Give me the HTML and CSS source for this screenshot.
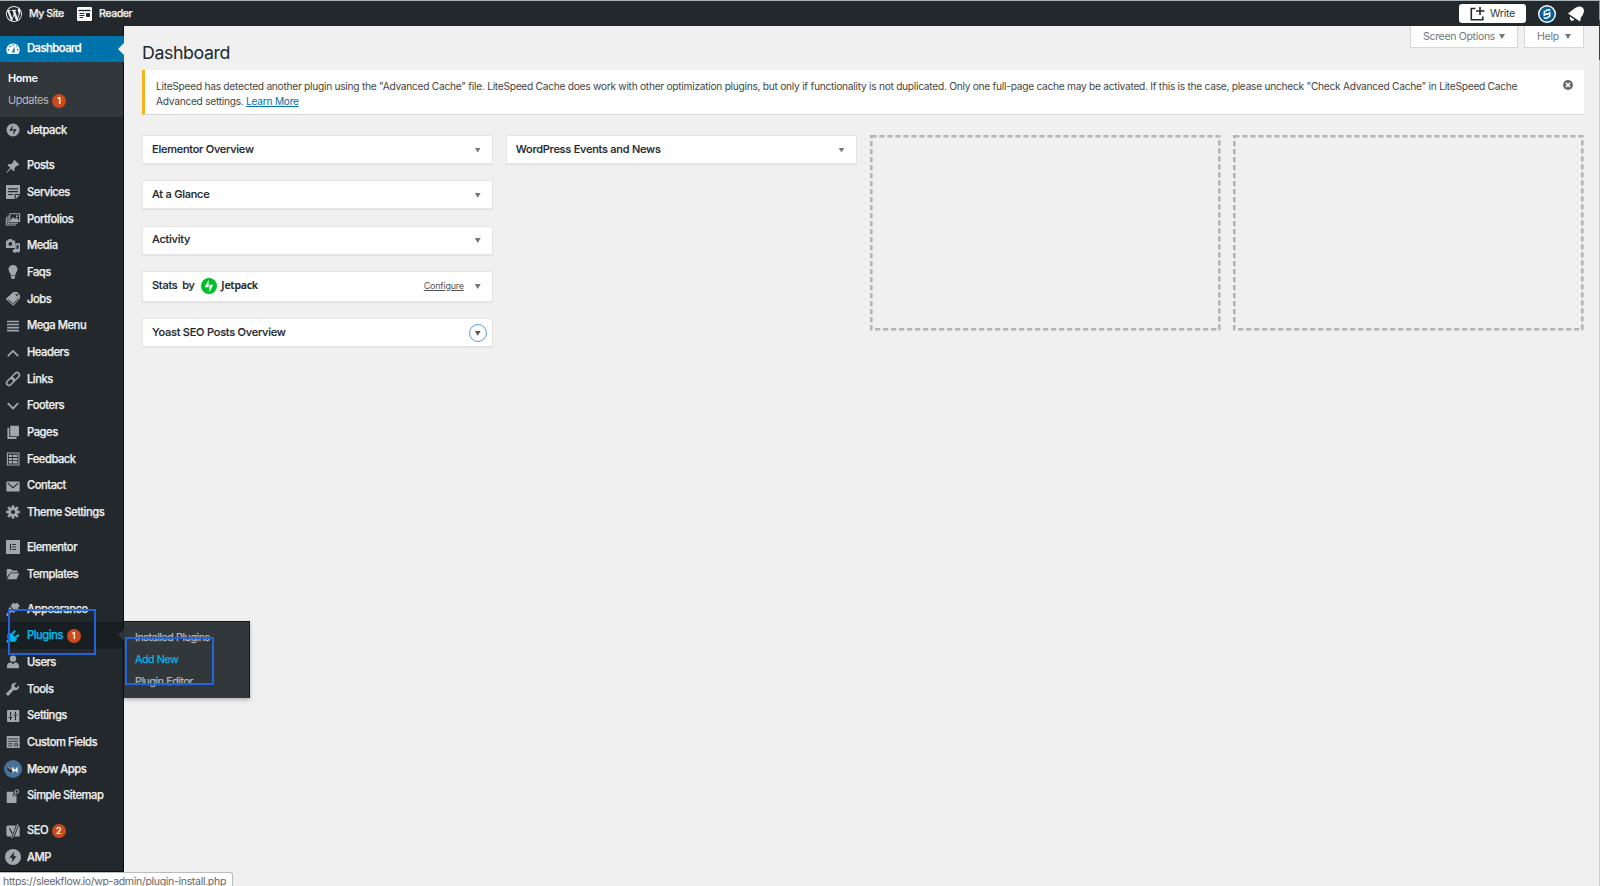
FILE: index.html
```html
<!DOCTYPE html>
<html lang="en">
<head>
<meta charset="utf-8">
<title>Dashboard</title>
<link rel="stylesheet" href="styles.css">
</head>
<body>
<header class="bar">
  <a class="bar-link site"><svg class="wp" viewBox="0 0 20 20"><path fill="#eee" d="M20 10c0-5.51-4.49-10-10-10S0 4.490 0 10c0 5.520 4.490 10 10 10s10-4.480 10-10zM7.780 15.370L4.370 6.220c.55-.02 1.170-.08 1.170-.08.5-.06.44-1.130-.06-1.110 0 0-1.450.11-2.370.11-.18 0-.37 0-.58-.01C4.120 2.690 6.870 1.110 10 1.110c2.330 0 4.450.87 6.050 2.340-.68-.11-1.650.39-1.650 1.580 0 .74.45 1.360.9 2.100.35.61.55 1.360.55 2.460 0 1.490-1.400 5-1.400 5l-3.030-8.370c.54-.02.82-.17.82-.17.5-.05.44-1.250-.06-1.220 0 0-1.440.12-2.380.12-.87 0-2.330-.12-2.330-.12-.5-.03-.56 1.200-.06 1.220l.92.08 1.260 3.410zM17.410 10c.24-.64.74-1.870.43-4.250.7 1.290 1.050 2.710 1.050 4.250 0 3.290-1.730 6.240-4.400 7.780.97-2.590 1.940-5.200 2.920-7.780zM6.100 18.090C3.120 16.650 1.110 13.530 1.110 10c0-1.300.23-2.480.72-3.590C3.250 10.300 4.670 14.200 6.100 18.090zm4.030-6.630l2.580 6.980c-.86.29-1.760.45-2.710.45-.79 0-1.570-.11-2.290-.33.81-2.380 1.620-4.740 2.420-7.100z"/></svg>My Site</a>
  <a class="bar-link reader"><svg class="rd" viewBox="0 0 15 14"><rect width="15" height="14" rx="1.300" fill="#fff"/><path d="M1.500 3.500h12" stroke="#23282d" stroke-width="1.400"/><path d="M2.500 6.500h5M2.500 8.500h5M2.500 10.500h3.500" stroke="#23282d" stroke-width="1"/><path d="M9.500 6.500h3v3h-3z" fill="#23282d" stroke="#23282d"/></svg>Reader</a>
  <span class="grow"></span>
  <a class="write"><svg viewBox="0 0 15 14"><path d="M5.500 1.500H1.300v11.200h11.500V9.500M10 0v8M6 4h8.500" fill="none" stroke="#23282d" stroke-width="1.600"/></svg>Write</a>
  <svg class="avatar" viewBox="0 0 18 18"><circle cx="9" cy="9" r="9" fill="#fff"/><circle cx="9" cy="9" r="7.600" fill="#0b5f96"/><path d="M12.200 4.900 9.500 4.700 6.300 7v3.200L9.200 8.300M8.800 9.700l2.900-1.900V11l-3.200 2.300-2.700-.2" fill="none" stroke="#fff" stroke-width="1.500"/></svg>
  <svg class="bell" viewBox="0 0 16 16"><path fill="#fff" d="M0 7.500 4.500 4Q9 0 12 .5q4 .5 4 5-.8 3.700-3 5.800L12 15.500z"/><path fill="#fff" d="M2 10.500 6.300 13.600Q5 15.700 3 14.500 1.200 13 2 10.500z"/></svg>
</header>
<div class="shell">
  <nav class="menu">
    <a class="item current"><svg viewBox="0 0 20 20"><path d="M2.500 17A9.300 9.300 0 0 1 10 2a9.300 9.300 0 0 1 7.500 15z"/><path class="cut" d="M8.500 14.500 12 6l.5 9zM9 3.500h2v2H9zM5 5.500h2v2H5zM2.500 10h2v2h-2zM15.500 10h2v2h-2zM14 5.500h1.500V7H14z"/></svg>Dashboard</a>
    <div class="sub"><a class="on">Home</a><a>Updates <b class="badge">1</b></a></div>
    <a class="item"><svg viewBox="0 0 20 20"><circle cx="10" cy="10" r="9.300"/><path class="cut" d="M9.300 3v8.300H5zM10.700 17V8.700H15z"/></svg>Jetpack</a>
    <i class="sep first"></i>
    <a class="item"><svg viewBox="0 0 20 20"><path d="M10.400 3 12 1 19 8l-2 1.800-1.600-.3-3.200 3.200.1 3.400-1.500 1.500-3.500-3.700L1.300 19.500l-.8-.7 5.500-6.200L2 9l1.800-1.700 3.500.3 3.300-3.200z"/></svg>Posts</a>
    <a class="item"><svg viewBox="0 0 20 20"><path d="M0 0h20v14l-6 6H0z"/><path class="line" d="M3 5.500h14M3 9.500h14M3 13.500h7M13 20v-6.500h7"/></svg>Services</a>
    <a class="item"><svg viewBox="0 0 20 20"><path class="str" d="M.5 7.500v11h14M3 5v11h14M5.500 2.500h14v11h-14z"/><path d="m6 13 4-6 3 3 2-2 4 5z"/><circle cx="15.500" cy="6" r="1.500"/></svg>Portfolios</a>
    <a class="item"><svg viewBox="0 0 20 20"><path d="M0 2h3l1-2h4l1 2h4v11H0zM13.500 6H20v10.500a2.700 2.700 0 1 1-2-2.600V9h-3v8a2.700 2.700 0 1 1-2-2.600z"/><circle class="cut" cx="6.200" cy="7" r="2.700"/></svg>Media</a>
    <a class="item"><svg viewBox="0 0 20 20"><path d="M10 0c4 0 6.500 2.800 6.500 6.200 0 3.500-3 4.800-3.200 8.300H6.700C6.500 11 3.500 9.700 3.500 6.200 3.500 2.800 6 0 10 0zM7 15.500h6v2L11.500 20h-3L7 17.500z"/></svg>Faqs</a>
    <a class="item"><svg viewBox="0 0 20 20"><path d="M10.500 0H16l4 4.500V9l-9.500 10.500L-.5 10z"/><path class="line thin" d="m2.500 10.500 8 6.500L18 8.500M13 2.500l4 4"/><circle class="cut" cx="16" cy="3.800" r="1.300"/></svg>Jobs</a>
    <a class="item"><svg viewBox="0 0 20 20"><path d="M1.500 2.500h17v2.300h-17zm0 4.300h17v2.300h-17zm0 4.300h17v2.300h-17zm0 4.300h17v2.300h-17z"/></svg>Mega Menu</a>
    <a class="item"><svg viewBox="0 0 20 20"><path class="str wide" d="m2.500 16 7.500-7.500 7.500 7.500"/></svg>Headers</a>
    <a class="item"><svg viewBox="0 0 20 20"><g class="str mid" transform="rotate(-45 10 10)"><rect x="-1.500" y="6.500" width="12.500" height="7" rx="3.500"/><rect x="9" y="6.500" width="12.500" height="7" rx="3.500"/></g></svg>Links</a>
    <a class="item"><svg viewBox="0 0 20 20"><path class="str wide" d="m2.500 6 7.500 7.500L17.500 6"/></svg>Footers</a>
    <a class="item"><svg viewBox="0 0 20 20"><path d="M6 1h12.500v15H6zM2 4h2.700v13.300H15V20H2z"/></svg>Pages</a>
    <a class="item"><svg viewBox="0 0 20 20"><path class="str" d="M2 1.500h16.500v17H2z"/><path d="M4 4h4.500v3.300H4zm0 4.500h4.500v3.300H4zM4 13h4.500v3.300H4zM9.500 4h7v3.300h-7zm0 4.500h7v3.300h-7zm0 4.500h7v3.300h-7z"/></svg>Feedback</a>
    <a class="item"><svg viewBox="0 0 20 20"><rect x=".5" y="3.500" width="19" height="14.500" rx="1"/><path class="line" d="m2.500 6 7.500 6.500L17.500 6"/></svg>Contact</a>
    <a class="item"><svg viewBox="0 0 20 20"><circle class="gear" cx="10" cy="10" r="5"/><path class="str teeth" d="M10 .2v4.300M10 15.500v4.300M.2 10h4.300M15.500 10h4.300M3 3l3 3M14 14l3 3M3 17l3-3M14 6l3-3"/></svg>Theme Settings</a>
    <i class="sep"></i>
    <a class="item"><svg viewBox="0 0 20 20"><path d="M0 0h20v20H0z"/><path class="line" d="M6.500 5.500v9M9 6.500h5M9 10h5M9 13.500h5"/></svg>Elementor</a>
    <a class="item"><svg viewBox="0 0 20 20"><path d="M1 3h6l2 2h7.500v3H6l-5 7zM6.500 9H19l-4 8.500H1.500z"/></svg>Templates</a>
    <i class="sep"></i>
    <a class="item"><svg viewBox="0 0 20 20"><path d="m10 1 3 1.500L16 1l4 5-2.500 1.500V10L14 13.500 6.500 6zM5.500 7l7.500 7.500-2 1-3-1.500L2 20l-2-1.500L4.500 12 4 9z"/></svg>Appearance</a>
    <div class="item hover"><svg viewBox="0 0 20 20"><path d="m4.500 4 2.700 2.700L12 1.500l2 2-4.500 4.700 3 3L17.500 7l2 2-5 4.700 1.500 1.500-2 1.800c-2.500 2-6 2.200-8 .5L2.500 20 0 18l2.800-3.500C1.500 12 1.500 8.500 3 6z"/></svg>Plugins <b class="badge">1</b>
      <div class="flyout"><a>Installed Plugins</a><a class="blue">Add New</a><a>Plugin Editor</a><span class="mark mark-sub"></span></div>
      <span class="mark mark-main"></span>
    </div>
    <a class="item"><svg viewBox="0 0 20 20"><circle cx="10" cy="5.300" r="4.500"/><path d="M6.500 10.500 10 13l3.500-2.500c3 .5 5 2.500 5 5V19h-17v-3.500c0-2.500 2-4.500 5-5z"/></svg>Users</a>
    <a class="item"><svg viewBox="0 0 20 20"><path d="M18.200 5 14.500 8.500 11.500 5.500 15 1.500C11.500.5 7.500 2.500 7.500 6.500c0 1 .2 1.500.5 2L1.300 15c-1.200 1-1.200 2.300-.2 3.500 1 1 2.500 1 3.500 0l6.400-7c4 1.500 8.700-1.500 7.200-6.500z"/></svg>Tools</a>
    <a class="item"><svg viewBox="0 0 20 20"><rect x="1.500" y="1.500" width="17.500" height="17" rx="1"/><path class="line" d="M6.500 4v5.500M6.500 11.500V16M13.500 4v3M13.500 9v7M4 12h5M11 8.500h5"/></svg>Settings</a>
    <a class="item"><svg viewBox="0 0 20 20"><path d="M1 1.500h18.500v17H1z"/><path class="line thin" d="M3 5.500h14.500M3 9h14.500M3 12.500h6M3 15.500h6M12 12.500h4.500v3H12z"/></svg>Custom Fields</a>
    <a class="item"><svg class="meow" viewBox="0 0 18 18"><circle cx="9" cy="9" r="9" fill="#46719b"/><path d="M3 6.500 5 9l3 1.500 2 2-4-.5-2.500-2.500z" fill="#222"/><path d="m3.500 6 1.500 2 3 1.500" stroke="#d98245" fill="none"/><path d="M9 12.500V8.300l2 2.500 2-2.500v4.200" stroke="#fff" stroke-width="1.300" fill="none"/></svg>Meow Apps</a>
    <a class="item"><svg viewBox="0 0 20 20"><path d="M1 4h10.500l-2.500 6 2 1.500L14 9h1v11H1z"/><path class="str" d="m10 11 4-5"/><circle class="str" cx="15.500" cy="3.500" r="2.500"/></svg>Simple Sitemap</a>
    <i class="sep"></i>
    <a class="item"><svg viewBox="0 0 20 20"><path d="M3 2h14a2.500 2.500 0 0 1 2.500 2.500V18H3a2.500 2.500 0 0 1-2.500-2.500v-11A2.500 2.500 0 0 1 3 2z"/><path d="M17 0 10.500 17c-.7 1.800-1.700 2.600-3.500 2.600" fill="none" stroke="#23282d" stroke-width="4"/><path class="line" d="m5 6 4 8"/><path class="str" d="M17 0 10.500 17c-.7 1.800-1.700 2.400-3.500 2.400"/></svg>SEO <b class="badge">2</b></a>
    <a class="item"><svg class="amp" viewBox="0 0 20 20"><circle cx="10" cy="10" r="10"/><path class="cut" d="m11.500 3.500-6 7.500h3.700l-.8 5.500 6-7.500h-3.600z"/></svg>AMP</a>
  </nav>
  <main class="content">
    <div class="tabs"><a>Screen Options<i class="tri"></i></a><a>Help<i class="tri"></i></a></div>
    <h1>Dashboard</h1>
    <section class="notice">
      <p>LiteSpeed has detected another plugin using the "Advanced Cache" file. LiteSpeed Cache does work with other optimization plugins, but only if functionality is not duplicated. Only one full-page cache may be activated. If this is the case, please uncheck "Check Advanced Cache" in LiteSpeed Cache<br>Advanced settings. <a>Learn More</a></p>
      <svg class="close" viewBox="0 0 10 10"><circle cx="5" cy="5" r="5" fill="#666a6e"/><path d="m3 3 4 4m0-4L3 7" stroke="#fff" stroke-width="1.500"/></svg>
    </section>
    <div class="cols">
      <div class="col">
        <div class="box">Elementor Overview<i class="tri"></i></div>
        <div class="box">At a Glance<i class="tri"></i></div>
        <div class="box">Activity<i class="tri"></i></div>
        <div class="box stats">Stats by <svg class="jp" viewBox="0 0 16 16"><circle cx="8" cy="8" r="8" fill="#00be28"/><path fill="#fff" d="M7.600 1.700v7.600H3.700zM8.400 14.300V6.700h3.900z"/></svg><span class="jpt">Jetpack</span><u>Configure</u><i class="tri"></i></div>
        <div class="box">Yoast SEO Posts Overview<i class="tri ring"></i></div>
      </div>
      <div class="col"><div class="box">WordPress Events and News<i class="tri"></i></div></div>
      <svg class="drop"><rect x="1.300" y="1.300" width="348" height="193"/></svg>
      <svg class="drop"><rect x="1.300" y="1.300" width="348" height="193"/></svg>
    </div>
  </main>
</div>
<div class="status">https://sleekflow.io/wp-admin/plugin-install.php</div>
<i class="edge"></i>
</body>
</html>
```
FILE: styles.css
```css
* { box-sizing: border-box; }
body { margin: 0; height: 886px; overflow: hidden; position: relative; background: #f0f0f0; color: #3c4146; font: 11px/15px Inter, "Liberation Sans", sans-serif; }
svg { display: block; flex: none; }
.bar { height: 26px; border-top: 1px solid #a9b5b6; background: #23282d; display: flex; align-items: center; color: #eee; font-size: 10.600px; font-weight: 500; letter-spacing: -.45px; -webkit-text-stroke: .25px; }
.bar-link { display: flex; align-items: center; }
.site { padding-left: 6px; width: 77px; }
.wp { width: 16px; height: 16px; margin-right: 7px; }
.rd { width: 15px; height: 14px; margin-right: 7px; }
.grow { flex: 1; }
.write { width: 67px; height: 19px; background: #fff; border-radius: 3px; color: #32373c; font-weight: 400; display: flex; align-items: center; padding-left: 11px; letter-spacing: -.3px; -webkit-text-stroke: 0; }
.write svg { width: 15px; height: 14px; margin-right: 5px; }
.avatar { width: 18px; height: 18px; margin-left: 12px; }
.bell { width: 16px; height: 16px; margin: 0 16px 0 12px; }
.shell { display: flex; height: 860px; }
.menu { width: 124px; flex: none; height: 846px; background: #23282d; border-right: 1px solid #0c0f12; border-bottom: 1px solid #0c0f12; padding-top: 9.500px; }
.item { position: relative; height: 26.67px; display: flex; align-items: center; padding-left: 6px; color: #eee; font-size: 11.200px; font-weight: 500; letter-spacing: -.46px; white-space: pre; -webkit-text-stroke: .25px; }
.item > svg { width: 14px; height: 14px; margin-right: 7px; fill: #a2a7ab; overflow: visible; -webkit-text-stroke: 0; }
.item .cut { fill: #23282d; }
.item .line { fill: none; stroke: #23282d; stroke-width: 1.600; }
.item .line.thin { stroke-width: 1.200; }
.item .str { fill: none; stroke: #a2a7ab; stroke-width: 1.600; }
.item .str.wide { stroke-width: 2.600; }
.item .str.mid { stroke-width: 2.300; }
.item .str.teeth { stroke-width: 3.600; }
.item .gear { fill: none; stroke: #a2a7ab; stroke-width: 4; }
.item > svg.meow { width: 18px; height: 18px; margin: 0 5px 0 -2px; }
.item > svg.amp { width: 16px; height: 16px; margin: 0 6px 0 -1px; }
.current { background: #0073aa; height: 26px; width: 124px; color: #fff; }
.current > svg { fill: #fff; }
.item.current .cut { fill: #0073aa; }
.current::after { content: ""; position: absolute; right: 0; top: 7px; border: 6px solid transparent; border-right-color: #f0f0f0; border-left: 0; }
.sub { background: #32373c; height: 55.500px; padding: 6px 0 0 8px; color: #b4b9be; letter-spacing: -.45px; }
.sub a { display: flex; align-items: center; height: 22px; white-space: pre; }
.sub .on { color: #fff; font-weight: 600; }
.badge { width: 14px; height: 14px; border-radius: 50%; background: #ca4a1f; color: #fff; font-size: 9px; line-height: 14px; font-weight: 600; text-align: center; letter-spacing: 0; margin-left: 1px; position: relative; top: .5px; -webkit-text-stroke: 0; }
.sep { display: block; height: 8.400px; }
.sep.first { height: 8.800px; }
.hover { background: #191e23; color: #00b9eb; }
.hover > svg { fill: #00b9eb; }
.hover::after { content: ""; position: absolute; right: -1px; top: 7px; border: 6px solid transparent; border-right-color: #32373c; border-left: 0; }
.flyout { position: absolute; left: 124px; top: -1px; width: 126px; height: 77px; background: #32373c; box-shadow: 0 2px 4px rgba(0,0,0,.25); border-top: 1px solid #14181b; border-right: 1px solid #14181b; z-index: 2; padding: 4.500px 0 0 11px; color: #b4b9be; font-size: 10.600px; font-weight: 400; letter-spacing: -.39px; }
.flyout a { display: flex; align-items: center; height: 21.700px; }
.flyout .blue { color: #00b9eb; }
.mark { position: absolute; border: 2px solid #2264dc; z-index: 3; }
.mark-main { left: 8px; top: -13px; width: 88px; height: 46px; }
.mark-sub { left: 1px; top: 15px; width: 89px; height: 48px; }
.content { flex: 1; min-width: 0; padding: 0 16px 0 18px; }
.tabs { height: 22px; margin-bottom: -10px; display: flex; justify-content: flex-end; gap: 6px; color: #72777c; font-size: 10.600px; letter-spacing: -.3px; }
.tabs a { height: 22px; background: #fff; border: 1px solid #d5d8da; border-top: 0; display: flex; align-items: center; justify-content: space-between; width: 60px; padding: 0 12px 0; }
.tabs a:first-child { width: 108px; letter-spacing: -.36px; }
.tri { width: 6px; height: 5px; background: #72777c; clip-path: polygon(0 0, 100% 0, 50% 100%); }
h1 { margin: 0; height: 32px; font-size: 17.800px; font-weight: 400; line-height: 30px; letter-spacing: -.4px; color: #23282d; width: 200px; }
.notice { background: #fff; height: 45px; border-left: 3px solid #f5b41d; border-bottom: 1px solid #d8d8d8; display: flex; justify-content: space-between; padding: 9px 11px; color: #444; }
.notice p { margin: 0; white-space: nowrap; font-size: 10.200px; letter-spacing: -.27px; }
.notice a { color: #0073aa; text-decoration: underline; }
.close { width: 10px; height: 10px; margin-top: 1px; }
.cols { display: grid; grid-template-columns: repeat(4, minmax(0, 1fr)); gap: 13px; margin-top: 20px; }
.col { display: flex; flex-direction: column; gap: 16.300px; }
.box { height: 29px; background: #fff; border: 1px solid #e5e5e5; box-shadow: 0 1px 1px rgba(0,0,0,.05); display: flex; align-items: center; justify-content: space-between; padding: 0 11px 1px 9px; color: #23282d; font-size: 11px; font-weight: 500; letter-spacing: -.24px; white-space: pre; -webkit-text-stroke: .15px; }
.box .tri { margin-top: 2px; }
.stats { height: 31px; justify-content: flex-start; word-spacing: 2px; padding-bottom: 2px; }
.jp { width: 16px; height: 16px; margin: 2px 4px 0 2px; }
.jpt { font-family: "Noto Sans", sans-serif; font-size: 10.600px; font-weight: 600; flex: 1; }
.stats u { font-size: 9px; font-weight: 400; color: #555; margin-right: 11px; -webkit-text-stroke: 0; }
.box .ring { position: relative; clip-path: none; width: 18px; height: 18px; margin: 1px -6px 0 0; border: 1px solid #5b9dd9; border-radius: 50%; background: none; }
.ring::after { content: ""; position: absolute; left: 5px; top: 6px; width: 6px; height: 5px; background: #555; clip-path: polygon(0 0, 100% 0, 50% 100%); }
.drop { width: 351px; height: 196px; }
.drop rect { fill: none; stroke: #b4b4b4; stroke-width: 2.600; stroke-dasharray: 5.300 2.700; }
.status { position: absolute; left: 0; top: 872px; width: 233px; height: 20px; background: #fff; border: 1px solid #bbb; border-left: 0; border-radius: 0 3px 0 0; color: #666; padding: 1px 3px; font-size: 10.500px; letter-spacing: -.3px; white-space: nowrap; z-index: 4; }
.edge { position: absolute; right: 0; top: 0; width: 1px; height: 886px; background: linear-gradient(#8d9a9d 20px, #1d4a63 20px, #1d4a63 60px, #c9cccc 60px); }
```
